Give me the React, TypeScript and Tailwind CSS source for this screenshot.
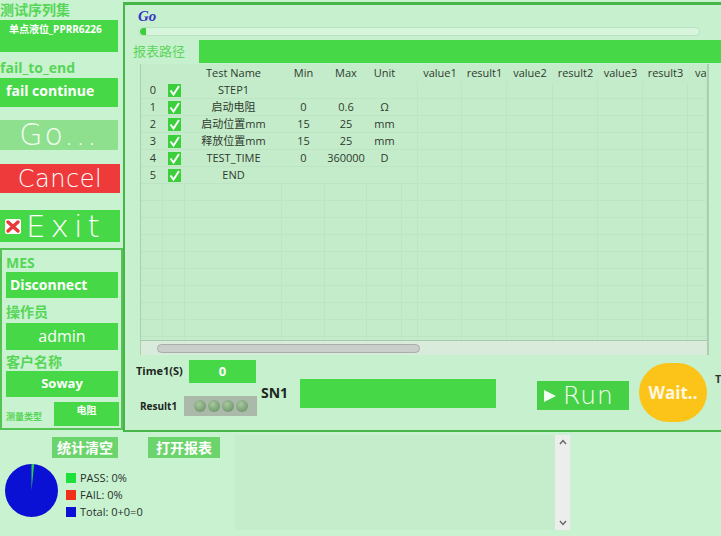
import React from 'react';

const G = 'bg-[#46d846]';
const LBL = 'text-[#55d655] font-bold';

function Check() {
  return (
    <svg width="13" height="13" viewBox="0 0 13 13">
      <rect width="13" height="13" fill="#3ccf3c" />
      <polyline points="2.5,6.5 5.5,10.5 11,2" fill="none" stroke="#fff" strokeWidth="2" />
    </svg>
  );
}

const cols = 'grid grid-cols-[22px_22px_97px_43px_42px_35px_16px_44px_45px_46px_45px_45px_45px_1fr]';

const rows = [
  ['0', 'STEP1', '', '', ''],
  ['1', '启动电阻', '0', '0.6', 'Ω'],
  ['2', '启动位置mm', '15', '25', 'mm'],
  ['3', '释放位置mm', '15', '25', 'mm'],
  ['4', 'TEST_TIME', '0', '360000', 'D'],
  ['5', 'END', '', '', ''],
];

function Cells({ n }: { n: number }) {
  return (
    <>
      {Array.from({ length: n }).map((_, i) => (
        <div key={i} className="border-r border-[#bde5c3] h-full" />
      ))}
    </>
  );
}

export default function App() {
  const empty = Array.from({ length: 10 });
  return (
    <div className="w-[721px] h-[536px] overflow-hidden bg-[#c9f2d1] font-['Open_Sans','Noto_Sans_CJK_SC',sans-serif] flex flex-col">
      <div className="h-[432px] flex">
        {/* left column */}
        <div className="w-[124px] flex flex-col">
          <div className={`h-[20px] pt-[1px] text-[14px] leading-[18px] ${LBL}`}>测试序列集</div>
          <div className={`h-[32px] w-[118px] ${G} text-white text-[10px] font-bold px-[9px] pt-[2px]`}>单点液位_PPRR6226</div>
          <div className={`mt-[6px] h-[20px] text-[14px] leading-[20px] ${LBL}`}>fail_to_end</div>
          <div className={`h-[29px] w-[118px] ${G} text-white text-[14px] font-bold px-[6px] leading-[26px]`}>fail continue</div>
          <div className="mt-[13px] h-[30px] w-[118px] bg-[#8ee08e] flex items-center justify-center text-[30px] leading-none text-[#f4fff4] font-['DejaVu_Sans'] font-light tracking-[2px]">Go...</div>
          <div className="mt-[14px] h-[29px] w-[120px] bg-[#ee3a3a] flex items-center justify-center text-[24px] leading-none text-white font-['DejaVu_Sans'] font-light tracking-[0.5px]">Cancel</div>
          <div className={`mt-[17px] h-[32px] w-[120px] ${G} flex items-center pl-[5px] gap-[5px]`}>
            <svg width="16" height="15" viewBox="0 0 16 15">
              <rect width="16" height="15" rx="2" fill="#fff" />
              <path d="M3 3 L13 12 M13 3 L3 12" stroke="#e83a3a" strokeWidth="3.5" strokeLinecap="round" />
            </svg>
            <span className="text-[31px] leading-none text-white font-['DejaVu_Sans'] font-light tracking-[5px]">Exit</span>
          </div>
          <div className="mt-[6px] h-[182px] w-[123px] border-2 border-[#55c455] flex flex-col pl-[4px] pt-[4px]">
            <div className={`h-[18px] text-[14px] leading-[18px] ${LBL}`}>MES</div>
            <div className={`h-[26px] w-[112px] ${G} text-white text-[14px] font-bold px-[4px] leading-[25px]`}>Disconnect</div>
            <div className={`mt-[5px] h-[19px] text-[14px] leading-[18px] ${LBL}`}>操作员</div>
            <div className={`mt-[1px] h-[27px] w-[112px] ${G} text-white text-[16px] text-center leading-[27px]`}>admin</div>
            <div className={`mt-[4px] h-[17px] text-[14px] leading-[16px] ${LBL}`}>客户名称</div>
            <div className={`h-[26px] w-[112px] ${G} text-white text-[13px] font-bold text-center leading-[24px]`}>Soway</div>
            <div className="mt-[5px] flex items-end">
              <span className="w-[48px] text-[9px] text-[#55d655] font-bold pb-[3px]">测量类型</span>
              <div className={`h-[24px] w-[65px] ${G} text-white text-[10px] font-bold text-center pt-[1px]`}>电阻</div>
            </div>
          </div>
        </div>

        {/* right panel */}
        <div className="flex-1 mt-[2px] border-l-2 border-t-[3px] border-b-2 border-[#47b547] bg-[#c7f0cf] flex flex-col">
          <div className="h-[21px] pl-[13px] pt-[3px] text-[15px] leading-[16px] italic font-bold text-[#3535c8] font-['Liberation_Serif',serif]">Go</div>
          <div className="ml-[13px] w-[562px] h-[9px] mt-[1px] bg-[#d6f5dc] border border-[#b9e3c0] rounded-sm flex items-center">
            <div className="ml-[1px] w-[6px] h-[7px] rounded-l-full bg-[#3ccf3c]" />
          </div>
          <div className="mt-[4px] h-[23px] flex items-center">
            <div className="w-[74px] pl-[8px] text-[13px] text-[#5ad65a]">报表路径</div>
            <div className={`flex-1 h-full ${G}`} />
          </div>
          {/* table */}
          <div className="mt-[1px] ml-[15px] w-[569px] h-[291px] border-l border-r-2 border-[#a9cfb0] bg-[#c4ecca] flex flex-col text-[11px] text-[#2e3a2e]">
            <div className={`${cols} h-[18px] items-center`}>
              <div />
              <div />
              <div className="text-center">Test Name</div>
              <div className="text-center">Min</div>
              <div className="text-center">Max</div>
              <div className="text-center">Unit</div>
              <div />
              <div className="text-center">value1</div>
              <div className="text-center">result1</div>
              <div className="text-center">value2</div>
              <div className="text-center">result2</div>
              <div className="text-center">value3</div>
              <div className="text-center">result3</div>
              <div className="pl-[7px] overflow-hidden whitespace-nowrap">value4</div>
            </div>
            <div className="h-[258px] overflow-hidden">
              {rows.map((r) => (
                <div key={r[0]} className={`${cols} h-[17px] items-center border-b border-[#bde5c3]`}>
                  <div className="text-center pl-[2px]">{r[0]}</div>
                  <div className="flex justify-center"><Check /></div>
                  <div className="text-center">{r[1]}</div>
                  <div className="text-center">{r[2]}</div>
                  <div className="text-center">{r[3]}</div>
                  <div className="text-center">{r[4]}</div>
                  <Cells n={8} />
                </div>
              ))}
              {empty.map((_, i) => (
                <div key={i} className={`${cols} h-[17px] border-b border-[#bde5c3]`}>
                  <Cells n={14} />
                </div>
              ))}
            </div>
            <div className="h-[15px] bg-[#d9ecdc] border-t border-[#aac8af] flex items-center pl-[16px]">
              <div className="w-[263px] h-[9px] rounded-full bg-[#cbcfcb] border border-[#a9aea9]" />
            </div>
          </div>
          {/* bottom controls */}
          <div className="flex-1 flex">
            <div className="w-[136px] pl-[11px] flex flex-col">
              <div className="mt-[5px] flex items-center h-[23px]">
                <span className="w-[53px] text-[11px] font-bold text-[#1e261e]">Time1(S)</span>
                <div className={`w-[67px] h-[23px] ${G} text-white text-[13px] font-bold text-center leading-[22px]`}>0</div>
              </div>
              <div className="mt-[13px] flex items-center h-[20px]">
                <span className="w-[48px] pl-[4px] text-[10px] font-bold text-[#1e261e]">Result1</span>
                <div className="w-[73px] h-[20px] bg-[#aab9aa] flex items-center justify-center gap-[2px]">
                  {[0, 1, 2, 3].map((i) => (
                    <div key={i} className="w-[12px] h-[12px] rounded-full bg-[radial-gradient(circle_at_40%_35%,#a8c8a0,#5f8a5a)]" />
                  ))}
                </div>
              </div>
            </div>
            <div className="pt-[27px] pl-[0px] w-[39px] text-[14px] font-bold text-[#1e261e]">SN1</div>
            <div className={`mt-[24px] w-[196px] h-[29px] ${G}`} />
            <div className="mt-[26px] ml-[41px] w-[92px] h-[29px] bg-[#46d046] flex items-center pl-[6px] gap-[6px]">
              <svg width="14" height="14" viewBox="0 0 14 14"><path d="M1 1 L13 7 L1 13 Z" fill="#f4fff4" /></svg>
              <span className="text-[25px] leading-none text-[#f4fff4] font-['DejaVu_Sans'] font-light tracking-[1px]">Run</span>
            </div>
            <div className="mt-[8px] ml-[10px] w-[68px] h-[59px] rounded-full bg-[#fcc419] flex items-center justify-center text-[17px] font-bold text-[#fff8e0]">Wait..</div>
            <div className="mt-[16px] ml-[8px] text-[11px] font-bold text-[#333]">T</div>
          </div>
        </div>
      </div>

      {/* bottom */}
      <div className="flex-1 flex">
        <div className="w-[235px] flex flex-col">
          <div className="mt-[5px] flex">
            <div className="ml-[52px] w-[66px] h-[21px] bg-[#6cd46c] text-white text-[14px] font-bold text-center leading-[21px]">统计清空</div>
            <div className="ml-[30px] w-[72px] h-[21px] bg-[#6cd46c] text-white text-[14px] font-bold text-center leading-[21px]">打开报表</div>
          </div>
          <div className="mt-[6px] flex items-start pl-[5px]">
            <svg width="53" height="53" viewBox="0 0 52 52">
              <circle cx="26" cy="26" r="26" fill="#0a10d4" />
              <path d="M26 26 L26 0 A26 26 0 0 1 28.6 0.13 Z" fill="#2ccf4a" />
            </svg>
            <div className="ml-[8px] mt-[7px] flex flex-col gap-[4px] text-[11px] text-[#26302a] leading-[13px]">
              <div className="flex items-center gap-[4px]"><span className="w-[10px] h-[10px] bg-[#1ee03a]" />PASS: 0%</div>
              <div className="flex items-center gap-[4px]"><span className="w-[10px] h-[10px] bg-[#f03018]" />FAIL: 0%</div>
              <div className="flex items-center gap-[4px]"><span className="w-[10px] h-[10px] bg-[#0a10d4]" />Total: 0+0=0</div>
            </div>
          </div>
        </div>
        <div className="mt-[3px] mb-[6px] w-[335px] bg-[#c6edcb] flex justify-end">
          <div className="w-[15px] bg-[#eceeec] flex flex-col justify-between items-center py-[4px] text-[#666]">
            <svg width="8" height="6" viewBox="0 0 8 6"><path d="M1 5 L4 1.5 L7 5" fill="none" stroke="#666" strokeWidth="1.4" /></svg>
            <svg width="8" height="6" viewBox="0 0 8 6"><path d="M1 1 L4 4.5 L7 1" fill="none" stroke="#666" strokeWidth="1.4" /></svg>
          </div>
        </div>
      </div>
    </div>
  );
}
